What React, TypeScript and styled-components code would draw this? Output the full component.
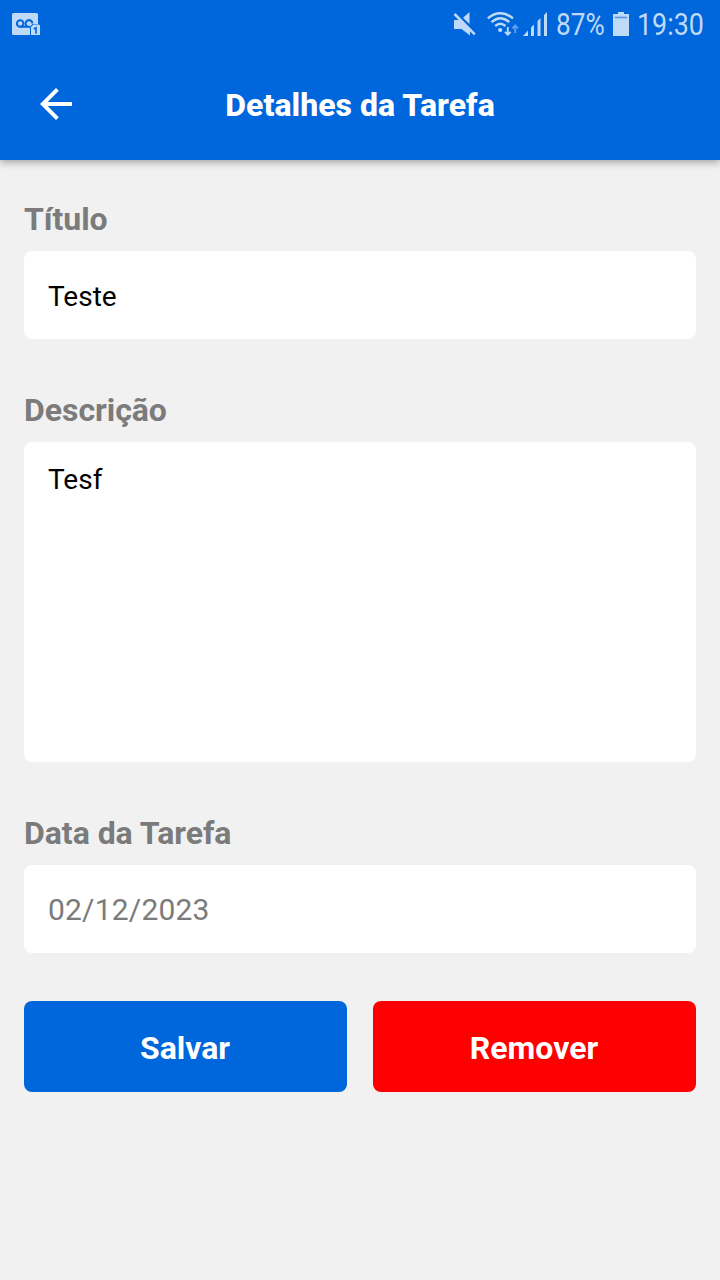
import React from 'react';
import styled, { createGlobalStyle } from 'styled-components';

const BLUE = '#0066dc';
const STATUS = '#bfdaf7';

const GlobalStyle = createGlobalStyle`
  * { box-sizing: border-box; }
  body { margin: 0; background: #f1f1f1; font-family: Roboto, sans-serif; }
`;

const Screen = styled.div`
  width: 720px;
  height: 1280px;
  display: flex;
  flex-direction: column;
  background: #f1f1f1;
  overflow: hidden;
`;

const TopArea = styled.div`
  flex: none;
  background: ${BLUE};
  box-shadow: 0 2px 8px rgba(0, 0, 0, 0.36);
`;

const StatusBar = styled.div`
  height: 48px;
  display: flex;
  align-items: center;
  justify-content: space-between;
  padding: 0 16px 0 12px;
  color: ${STATUS};
`;

const StatusIcons = styled.div`
  display: flex;
  align-items: center;
`;

const StatusText = styled.span<{ $width: number; $scale: number }>`
  width: ${(p) => p.$width}px;
  padding-top: 1px;
  font-size: 30.5px;
  line-height: 48px;
  white-space: nowrap;
  transform: scaleX(${(p) => p.$scale});
  transform-origin: left center;
`;

const Glyph = styled.svg<{ $gap?: number }>`
  display: block;
  flex: none;
  margin-right: ${(p) => p.$gap ?? 0}px;
`;

const Header = styled.header`
  height: 112px;
  display: grid;
  grid-template-columns: 112px 1fr 112px;
  align-items: center;
`;

const BackButton = styled.button`
  width: 112px;
  height: 112px;
  display: flex;
  align-items: center;
  justify-content: center;
  padding: 0;
  border: 0;
  background: transparent;
`;

const Title = styled.h1`
  margin: 2px 0 0;
  text-align: center;
  color: #fff;
  font-size: 32px;
  font-weight: 850;
  letter-spacing: 0.04px;
  line-height: 38px;
`;

const Form = styled.form`
  display: flex;
  flex-direction: column;
  padding: 40px 24px 0;
`;

const Fields = styled.div`
  display: flex;
  flex-direction: column;
  gap: 52px;
  margin-bottom: 48px;
`;

const Field = styled.label`
  display: flex;
  flex-direction: column;
`;

const Label = styled.span`
  height: 43px;
  margin-bottom: 8px;
  color: #7b7b7b;
  font-size: 32px;
  font-weight: 700;
  letter-spacing: -0.04px;
  line-height: 38px;
`;

const inputBase = `
  display: block;
  width: 100%;
  border: 0;
  border-radius: 8px;
  outline: none;
  background: #fff;
  font-family: Roboto, sans-serif;
`;

const Input = styled.input<{ $muted?: boolean }>`
  ${inputBase}
  height: 88px;
  padding: ${(p) => (p.$muted ? '0 24px' : '2px 24px 0')};
  color: ${(p) => (p.$muted ? '#7b7b7b' : '#000')};
  font-size: ${(p) => (p.$muted ? 30 : 28)}px;
  letter-spacing: ${(p) => (p.$muted ? 0.2 : 0)}px;
`;

const TextArea = styled.textarea`
  ${inputBase}
  height: 320px;
  padding: 21px 24px;
  color: #000;
  font-size: 28px;
  line-height: 33px;
  resize: none;
`;

const Actions = styled.div`
  display: grid;
  grid-template-columns: 1fr 1fr;
  gap: 26px;
`;

const Action = styled.button<{ $color: string }>`
  height: 91px;
  padding: 3px 1px 0 0;
  border: 0;
  border-radius: 8px;
  background: ${(p) => p.$color};
  color: #fff;
  font: 700 32px/38px Roboto, sans-serif;
`;

export default function App() {
  return (
    <>
      <GlobalStyle />
      <Screen>
        <TopArea>
          <StatusBar>
            <Glyph width="29" height="24" viewBox="0 0 29 24">
              <path d="M1.5 1H24.5Q26 1 26 2.5V12H20.5L18 14.5V23H1.5Q0 23 0 21.5V2.5Q0 1 1.5 1Z" fill={STATUS} />
              <g fill="none" stroke={BLUE} strokeWidth="2">
                <circle cx="8.2" cy="11.5" r="3.3" />
                <path d="M8.2 14.8H18M15 14.3A3.4 3.4 0 1 1 20.4 11.6" />
              </g>
              <path d="M21.5 12.5H27L28 13.5V23H19V15Z" fill={STATUS} />
              <path d="M21.8 17L24 15.8V21.8" fill="none" stroke={BLUE} strokeWidth="1.6" />
            </Glyph>
            <StatusIcons>
              <Glyph width="24" height="24" viewBox="0 0 24 24" $gap={10}>
                <path d="M1 8H7L9 6.5L17 14.5V23.5L8.5 17H1Z" fill={STATUS} />
                <path d="M10 5.8L16.5 0V12Z" fill={STATUS} />
                <path d="M2.5 .8L23 21.3" stroke={BLUE} strokeWidth="2.4" />
                <path d="M1.5 2L21.8 22.3" stroke={STATUS} strokeWidth="2.5" />
              </Glyph>
              <Glyph width="32" height="24" viewBox="0 0 32 24" $gap={4}>
                <g fill="none" stroke={STATUS} strokeWidth="2.4">
                  <path d="M.8 6.4Q13 -4 26 6.4" />
                  <path d="M4.5 10.2Q13.3 2.4 22.3 10.2" />
                  <path d="M8.2 14Q13.3 9.4 18.5 14" />
                </g>
                <circle cx="13.2" cy="18" r="2.1" fill={STATUS} />
                <path d="M20.8 15V22.5M18 19.8L20.8 22.7L23.6 19.8" fill="none" stroke={STATUS} strokeWidth="1.9" />
                <path d="M28.2 21V13.5M25.4 16.3L28.2 13.4L31 16.3" fill="none" stroke="#609fec" strokeWidth="1.9" />
              </Glyph>
              <Glyph width="25" height="24" viewBox="0 0 25 24" $gap={8}>
                <path d="M0 24L5 18.5V24ZM8 15.5L11 12.5V24H8ZM14.5 9L17.5 6V24H14.5ZM21 3L24 0V24H21Z" fill={STATUS} />
              </Glyph>
              <StatusText $width={57} $scale={0.86}>87%</StatusText>
              <Glyph width="16" height="24" viewBox="0 0 16 24" $gap={8}>
                <path d="M5 0H11V2H16V24H0V2H5Z" fill={STATUS} />
                <path d="M2 5.5H14" stroke="#5594e2" strokeWidth="1.6" />
              </Glyph>
              <StatusText $width={67} $scale={0.88}>19:30</StatusText>
            </StatusIcons>
          </StatusBar>
          <Header>
            <BackButton type="button" aria-label="Voltar">
              <Glyph width="32" height="32" viewBox="0 0 32 32">
                <path d="M32 14V18H7.7L18.8 29.2L16 32L0 16L16 0L18.8 2.8L7.7 14Z" fill="#fff" />
              </Glyph>
            </BackButton>
            <Title>Detalhes da Tarefa</Title>
          </Header>
        </TopArea>
        <Form>
          <Fields>
            <Field>
              <Label>Título</Label>
              <Input defaultValue="Teste" />
            </Field>
            <Field>
              <Label>Descrição</Label>
              <TextArea defaultValue="Tesf" />
            </Field>
            <Field>
              <Label>Data da Tarefa</Label>
              <Input defaultValue="02/12/2023" $muted />
            </Field>
          </Fields>
          <Actions>
            <Action type="button" $color={BLUE}>Salvar</Action>
            <Action type="button" $color="#ff0000">Remover</Action>
          </Actions>
        </Form>
      </Screen>
    </>
  );
}
